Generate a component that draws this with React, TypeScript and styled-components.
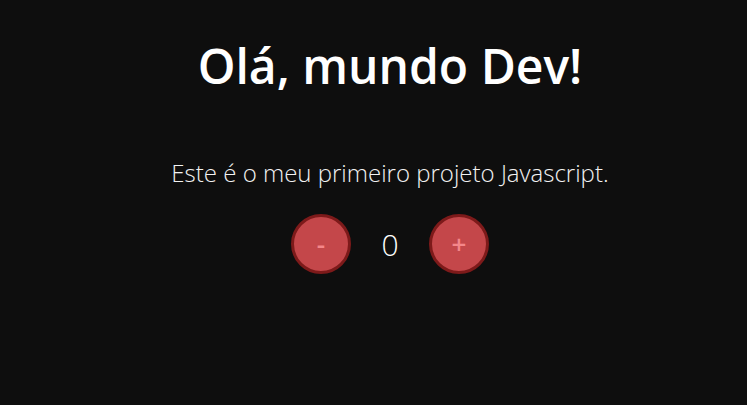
import { useState } from "react";
import styled, { createGlobalStyle } from "styled-components";

const GlobalStyle = createGlobalStyle`
  html, body {
    margin: 0;
    padding: 0;
    background: #0e0e0e;
    font-family: "Open Sans", "Liberation Sans", sans-serif;
  }
`;

const Page = styled.main`
  min-height: 405px;
  display: flex;
  flex-direction: column;
  align-items: center;
  color: #ffffff;
  padding: 36px 0 0 33px;
  box-sizing: border-box;
`;

const Title = styled.h1`
  margin: 0;
  font-size: 48px;
  font-weight: 600;
  line-height: 60px;
`;

const Subtitle = styled.p`
  margin: 62px 0 0;
  font-size: 24px;
  font-weight: 300;
  line-height: 30px;
  color: #f2f2f2;
`;

const Counter = styled.div`
  display: flex;
  align-items: center;
  gap: 28px;
  margin-top: 26px;
`;

const RoundButton = styled.button`
  width: 60px;
  height: 60px;
  box-sizing: border-box;
  border-radius: 50%;
  border: 3px solid #7d1a1a;
  background: #c4474a;
  color: #f4878a;
  font-family: "Open Sans", "Liberation Sans", sans-serif;
  font-size: 26px;
  font-weight: 600;
  display: flex;
  align-items: center;
  justify-content: center;
  padding: 0;
  cursor: pointer;
`;

const Value = styled.span`
  font-size: 30px;
  font-weight: 300;
  min-width: 22px;
  text-align: center;
`;

export default function App() {
  const [count, setCount] = useState(0);

  return (
    <>
      <GlobalStyle />
      <Page>
        <Title>Olá, mundo Dev!</Title>
        <Subtitle>Este é o meu primeiro projeto Javascript.</Subtitle>
        <Counter>
          <RoundButton onClick={() => setCount(count - 1)}>-</RoundButton>
          <Value>{count}</Value>
          <RoundButton onClick={() => setCount(count + 1)}>+</RoundButton>
        </Counter>
      </Page>
    </>
  );
}
